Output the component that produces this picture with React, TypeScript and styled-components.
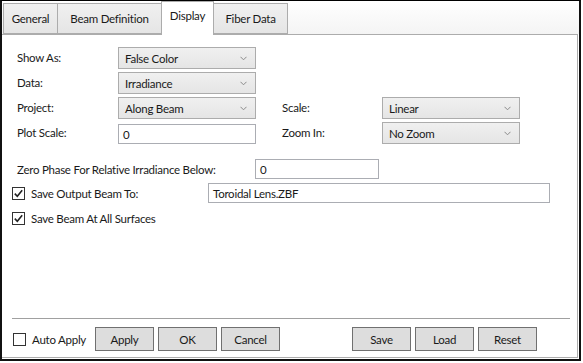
import React from 'react'
import styled, { createGlobalStyle } from 'styled-components'

const GlobalStyle = createGlobalStyle`
  html, body {
    margin: 0;
    padding: 0;
    background: #ffffff;
  }
  body {
    font-family: Lato, "Noto Sans", "Liberation Sans", sans-serif;
    font-size: 11.5px;
    letter-spacing: -0.25px;
    color: #1a1a1a;
  }
  * {
    box-sizing: border-box;
  }
`

const Frame = styled.div`
  width: 581px;
  height: 361px;
  border-top: 1px solid #000;
  border-left: 2px solid #111;
  border-right: 2px solid #111;
  border-bottom: 2px solid #111;
  display: flex;
  flex-direction: column;
  background: #fff;
`

const TabStrip = styled.div`
  height: 33px;
  flex: none;
  display: flex;
  align-items: flex-end;
  padding-left: 1px;
  background: linear-gradient(#ffffff, #f4f4f4);
  position: relative;
  z-index: 1;
`

const Tab = styled.div<{ $active?: boolean; $width: number }>`
  width: ${({ $width }) => `${$width}px`};
  height: ${({ $active }) => ($active ? '34px' : '31px')};
  margin-bottom: ${({ $active }) => ($active ? '-1px' : '0')};
  padding-top: ${({ $active }) => ($active ? '4px' : '5px')};
  border: 1px solid #acacac;
  border-bottom: ${({ $active }) => ($active ? 'none' : '1px solid #acacac')};
  margin-left: -1px;
  background: ${({ $active }) => ($active ? '#ffffff' : 'linear-gradient(#f0f0f0, #e5e5e5)')};
  line-height: 20px;
  text-align: center;
  white-space: nowrap;
  &:first-child {
    margin-left: 0;
  }
`

const Panel = styled.div`
  flex: 1;
  border: 1px solid #acacac;
  border-left: none;
  margin-right: 1px;
  margin-bottom: 1px;
  display: flex;
  flex-direction: column;
`

const Form = styled.div`
  padding: 12px 0 0 15px;
  display: flex;
  flex-direction: column;
  flex: 1;
`

const Grid = styled.div`
  display: grid;
  grid-template-columns: 101px 138px 26px 100px 138px;
  grid-auto-rows: 22px;
  row-gap: 3px;
  align-items: end;
`

const Label = styled.div`
  line-height: 20px;
  align-self: center;
  white-space: nowrap;
`

const ComboBox = styled.div`
  height: 22px;
  border: 1px solid #acacac;
  background: linear-gradient(#f0f0f0, #e5e5e5);
  display: flex;
  align-items: center;
  justify-content: space-between;
  padding: 0 8px 0 6px;
`

const TextBox = styled.div<{ $width?: number }>`
  height: 20px;
  width: ${({ $width }) => ($width ? `${$width}px` : 'auto')};
  border: 1px solid #abadb3;
  background: #fff;
  display: flex;
  align-items: center;
  padding: 0 4px;
`

const ZeroRow = styled.div`
  display: flex;
  align-items: center;
  margin-top: 15px;
`

const ZeroLabel = styled.div`
  width: 238px;
  white-space: nowrap;
`

const CheckRow = styled.div<{ $top?: number }>`
  display: flex;
  align-items: center;
  height: 20px;
  margin-top: ${({ $top }) => `${$top ?? 5}px`};
  margin-left: -5px;
`

const Box = styled.div`
  width: 13px;
  height: 13px;
  border: 1px solid #333;
  background: #fff;
  display: flex;
  align-items: center;
  justify-content: center;
  flex: none;
`

const CheckLabel = styled.div<{ $width?: number }>`
  margin-left: 6px;
  width: ${({ $width }) => ($width ? `${$width}px` : 'auto')};
  white-space: nowrap;
`

const Footer = styled.div`
  margin: 0 7px 0 10px;
  border-top: 1px solid #a0a0a0;
  padding: 8px 0 6px 1px;
  display: flex;
  align-items: center;
`

const Button = styled.div<{ $gap?: number }>`
  width: 59px;
  height: 24px;
  border: 1px solid #707070;
  background: #dddddd;
  display: flex;
  align-items: center;
  justify-content: center;
  margin-left: ${({ $gap }) => `${$gap ?? 4}px`};
`

const Chevron = () => (
  <svg width="7" height="5" viewBox="0 0 7 5">
    <path d="M0.5 0.8 L3.5 3.8 L6.5 0.8" fill="none" stroke="#8a8a8a" strokeWidth="1" />
  </svg>
)

const Check = ({ checked }: { checked?: boolean }) => (
  <Box>
    {checked && (
      <svg width="11" height="11" viewBox="0 0 11 11">
        <path d="M1.8 5.6 L4.3 8.2 L9.2 2.2" fill="none" stroke="#222" strokeWidth="1.6" />
      </svg>
    )}
  </Box>
)

const Combo = ({ value }: { value: string }) => (
  <ComboBox>
    <span>{value}</span>
    <Chevron />
  </ComboBox>
)

const tabs: [string, number][] = [
  ['General', 55],
  ['Beam Definition', 105],
  ['Display', 53],
  ['Fiber Data', 75],
]

export default function App() {
  return (
    <>
      <GlobalStyle />
      <Frame>
        <TabStrip>
          {tabs.map(([t, w]) => (
            <Tab key={t} $width={w} $active={t === 'Display'}>
              {t}
            </Tab>
          ))}
        </TabStrip>
        <Panel>
          <Form>
            <Grid>
              <Label>Show As:</Label>
              <Combo value="False Color" />
              <span />
              <span />
              <span />
              <Label>Data:</Label>
              <Combo value="Irradiance" />
              <span />
              <span />
              <span />
              <Label>Project:</Label>
              <Combo value="Along Beam" />
              <span />
              <Label>Scale:</Label>
              <Combo value="Linear" />
              <Label>Plot Scale:</Label>
              <TextBox>0</TextBox>
              <span />
              <Label>Zoom In:</Label>
              <Combo value="No Zoom" />
            </Grid>
            <ZeroRow>
              <ZeroLabel>Zero Phase For Relative Irradiance Below:</ZeroLabel>
              <TextBox $width={124}>0</TextBox>
            </ZeroRow>
            <CheckRow $top={4}>
              <Check checked />
              <CheckLabel $width={177}>Save Output Beam To:</CheckLabel>
              <TextBox $width={342}>Toroidal Lens.ZBF</TextBox>
            </CheckRow>
            <CheckRow>
              <Check checked />
              <CheckLabel>Save Beam At All Surfaces</CheckLabel>
            </CheckRow>
          </Form>
          <Footer>
            <Check />
            <CheckLabel $width={63}>Auto Apply</CheckLabel>
            <Button $gap={0}>Apply</Button>
            <Button>OK</Button>
            <Button>Cancel</Button>
            <Button $gap={72}>Save</Button>
            <Button>Load</Button>
            <Button>Reset</Button>
          </Footer>
        </Panel>
      </Frame>
    </>
  )
}
